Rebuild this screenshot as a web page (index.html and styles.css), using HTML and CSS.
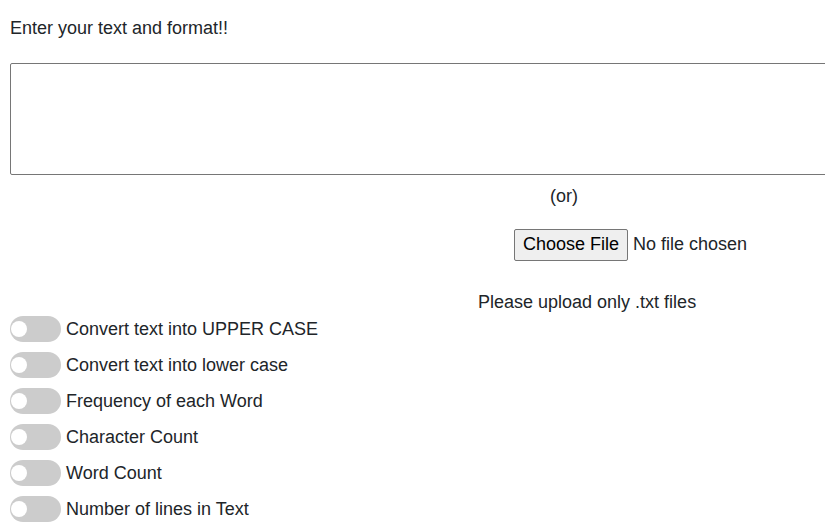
FILE: index.html
```html
<!DOCTYPE html>
<html>
<head>
<meta charset="utf-8">
<link rel="stylesheet" href="styles.css">
</head>
<body>
<p class="title">Enter your text and format!!</p>
<textarea class="input-area"></textarea>
<div class="or">(or)</div>
<div class="file-row"><input type="file" class="file-input" accept=".txt"></div>
<div class="note">Please upload only .txt files</div>
<div class="options">
  <label class="option"><span class="switch"><span class="knob"></span></span><span class="label-text">Convert text into UPPER CASE</span></label>
  <label class="option"><span class="switch"><span class="knob"></span></span><span class="label-text">Convert text into lower case</span></label>
  <label class="option"><span class="switch"><span class="knob"></span></span><span class="label-text">Frequency of each Word</span></label>
  <label class="option"><span class="switch"><span class="knob"></span></span><span class="label-text">Character Count</span></label>
  <label class="option"><span class="switch"><span class="knob"></span></span><span class="label-text">Word Count</span></label>
  <label class="option"><span class="switch"><span class="knob"></span></span><span class="label-text">Number of lines in Text</span></label>
</div>
</body>
</html>
```
FILE: styles.css
```css
html {
  overflow: hidden;
}
body {
  margin: 0;
  padding: 0 10px;
  font-family: "Liberation Sans", Arial, sans-serif;
  font-size: 18px;
  line-height: 21px;
  color: #212529;
  background: #fff;
}
.title {
  margin: 0;
  padding-top: 18px;
}
.input-area {
  display: block;
  box-sizing: border-box;
  margin-top: 24px;
  width: 900px;
  height: 112px;
  border: 1px solid #767676;
  border-radius: 2px;
  resize: none;
  padding: 2px;
  font-family: inherit;
}
.or {
  margin-top: 11px;
  padding-left: 540px;
}
.file-row {
  margin-top: 22px;
  padding-left: 504px;
  height: 32px;
}
.file-input {
  font-family: inherit;
  font-size: 18px;
  color: #212529;
  height: 32px;
  width: 260px;
}
.file-input::file-selector-button {
  font-family: inherit;
  font-size: 18px;
  height: 32px;
  padding: 0 8px 1px;
  margin-right: 5px;
  background: #efefef;
  border: 1px solid #767676;
  border-radius: 2px;
  color: #000;
}
.note {
  margin-top: 31px;
  padding-left: 468px;
}
.options {
  margin-top: 3px;
  display: flex;
  flex-direction: column;
  gap: 10px;
}
.option {
  display: flex;
  align-items: center;
  gap: 5px;
  height: 26px;
}
.switch {
  position: relative;
  width: 51px;
  height: 26px;
  border-radius: 13px;
  background: #ccc;
  flex: none;
}
.knob {
  position: absolute;
  left: 1px;
  top: 5px;
  width: 16px;
  height: 16px;
  border-radius: 50%;
  background: #fff;
}
```
